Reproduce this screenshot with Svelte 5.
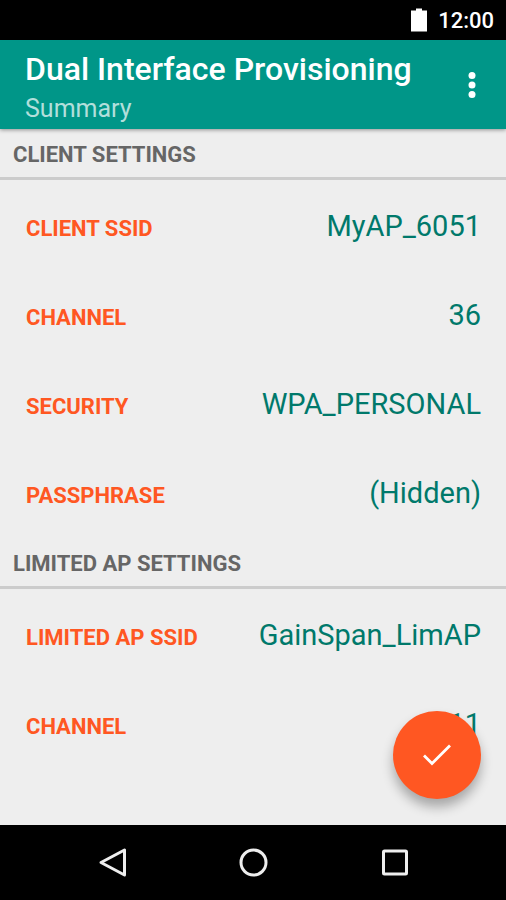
<script>
	const sections = [
		{
			title: 'CLIENT SETTINGS',
			rows: [
				{ label: 'CLIENT SSID', value: 'MyAP_6051' },
				{ label: 'CHANNEL', value: '36' },
				{ label: 'SECURITY', value: 'WPA_PERSONAL' },
				{ label: 'PASSPHRASE', value: '(Hidden)' }
			]
		},
		{
			title: 'LIMITED AP SETTINGS',
			rows: [
				{ label: 'LIMITED AP SSID', value: 'GainSpan_LimAP' },
				{ label: 'CHANNEL', value: '11' }
			]
		}
	];
</script>

<div class="screen">
	<div class="status-bar">
		<svg class="battery" width="16" height="24" viewBox="0 0 16 24" aria-hidden="true">
			<path fill="#fff" d="M5 0.5h6v2h5v21H0v-21h5z" />
		</svg>
		<span>12:00</span>
	</div>

	<header class="toolbar">
		<div class="titles">
			<h1>Dual Interface Provisioning</h1>
			<p>Summary</p>
		</div>
		<button class="icon-button" aria-label="More options">
			<svg width="8" height="28" viewBox="0 0 8 28" fill="#fff" aria-hidden="true">
				<circle cx="4" cy="4.5" r="3.5" />
				<circle cx="4" cy="14" r="3.5" />
				<circle cx="4" cy="23.5" r="3.5" />
			</svg>
		</button>
	</header>

	<main>
		{#each sections as section}
			<section>
				<h2>{section.title}</h2>
				<dl>
					{#each section.rows as row}
						<div class="row">
							<dt>{row.label}</dt>
							<dd>{row.value}</dd>
						</div>
					{/each}
				</dl>
			</section>
		{/each}

		<button class="fab" aria-label="Confirm">
			<svg width="30" height="24" viewBox="0 0 30 24" aria-hidden="true">
				<path d="M2 12.5l8 8L28 2.5" fill="none" stroke="#fff" stroke-width="2.8" />
			</svg>
		</button>
	</main>

	<nav class="nav-bar">
		<button class="icon-button" aria-label="Back">
			<svg width="32" height="32" viewBox="0 0 32 32" aria-hidden="true">
				<path d="M28.5 3v25L5 15.5z" />
			</svg>
		</button>
		<button class="icon-button" aria-label="Home">
			<svg width="32" height="32" viewBox="0 0 32 32" aria-hidden="true">
				<circle cx="16.5" cy="15.5" r="12.5" />
			</svg>
		</button>
		<button class="icon-button" aria-label="Recent apps">
			<svg width="32" height="32" viewBox="0 0 32 32" aria-hidden="true">
				<rect x="5.5" y="4" width="23" height="23" rx="1" />
			</svg>
		</button>
	</nav>
</div>

<style>
	:global(body) {
		margin: 0;
	}
	.screen {
		display: flex;
		flex-direction: column;
		min-height: 100vh;
		background: #eee;
		font-family: Roboto, "Liberation Sans", sans-serif;
	}
	h1, h2, p, dl, dd {
		margin: 0;
	}
	svg {
		display: block;
	}
	button {
		padding: 0;
		border: 0;
		cursor: pointer;
	}
	.icon-button {
		display: flex;
		align-items: center;
		justify-content: center;
		background: none;
	}

	/* --- status bar --- */
	.status-bar {
		display: flex;
		align-items: center;
		justify-content: flex-end;
		gap: 11px;
		height: 40px;
		padding: 0 12px;
		background: #000;
		color: #fff;
		font-size: 22px;
		font-weight: 500;
	}

	/* --- toolbar --- */
	.toolbar {
		position: relative;
		display: flex;
		align-items: center;
		justify-content: space-between;
		height: 89px;
		padding: 0 14px 0 25px;
		background: #009688;
		color: #fff;
		box-shadow: 0 1px 4px rgba(0, 0, 0, 0.4);
	}
	.titles {
		padding-top: 8px;
	}
	h1 {
		font-size: 32px;
		font-weight: 500;
		line-height: 40px;
	}
	.titles p {
		color: #b2dfdb;
		font-size: 25px;
		line-height: 40px;
	}
	.toolbar .icon-button {
		width: 40px;
		height: 48px;
	}

	/* --- settings --- */
	main {
		position: relative;
		flex: 1;
		padding-top: 1px;
	}
	h2 {
		height: 47px;
		padding: 0 13px;
		border-bottom: 3px solid #ccc;
		color: #666;
		font-size: 22px;
		font-weight: 700;
		line-height: 50px;
	}
	dl {
		padding-top: 3px;
	}
	.row {
		display: flex;
		align-items: baseline;
		justify-content: space-between;
		height: 89px;
		padding: 0 25px 0 26px;
	}
	dt {
		color: #ff5722;
		font-size: 22px;
		font-weight: 700;
	}
	dd {
		color: #00796b;
		font-size: 29px;
		line-height: 87px;
	}

	/* floats over the last row */
	.fab {
		position: absolute;
		right: 25px;
		bottom: 26px;
		display: flex;
		align-items: center;
		justify-content: center;
		width: 88px;
		height: 88px;
		border-radius: 50%;
		background: #ff5722;
		box-shadow: 0 8px 12px rgba(0, 0, 0, 0.3);
	}

	/* --- navigation bar --- */
	.nav-bar {
		display: flex;
		justify-content: center;
		gap: 93px;
		height: 75px;
		background: #000;
	}
	.nav-bar .icon-button {
		width: 48px;
	}
	.nav-bar svg {
		fill: none;
		stroke: #eee;
		stroke-width: 3;
		stroke-linejoin: round;
	}
</style>
